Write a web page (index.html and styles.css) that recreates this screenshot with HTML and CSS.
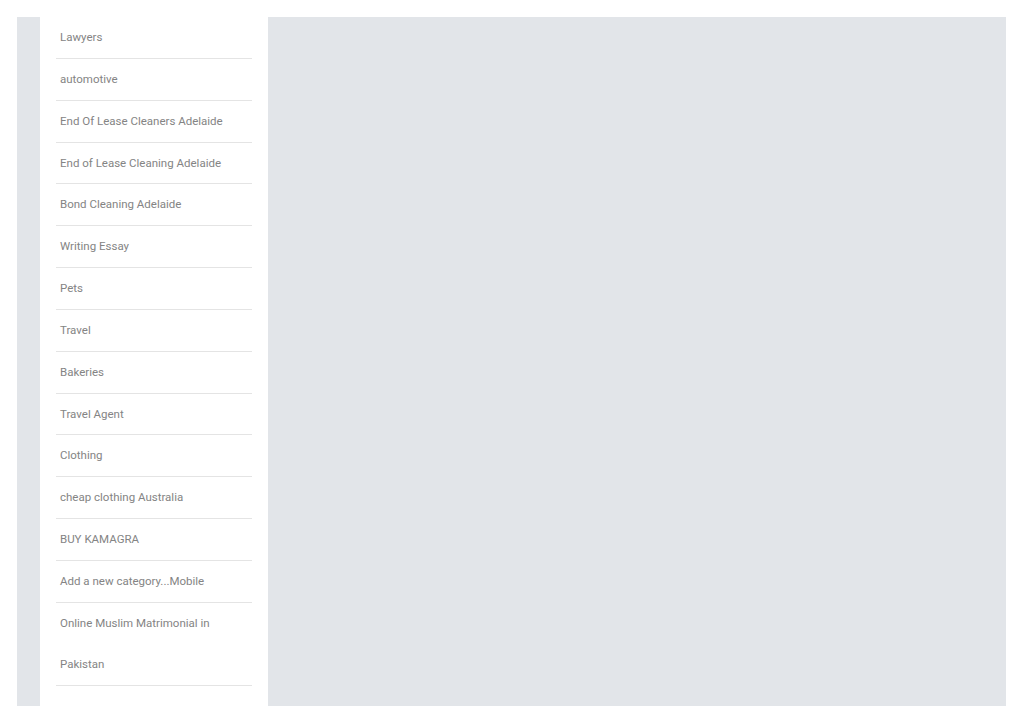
FILE: index.html
```html
<!DOCTYPE html>
<html lang="en">

<head>
    <meta charset="UTF-8">
    <meta name="viewport" content="width=device-width, initial-scale=1.0">
    <title>Categories</title>
    <link rel="stylesheet" href="styles.css">
</head>

<body>
    <div class="page">
        <aside class="sidebar">
            <ul class="categorias">
                <li><a href="#">Lawyers</a></li>
                <li><a href="#">automotive</a></li>
                <li><a href="#">End Of Lease Cleaners Adelaide</a></li>
                <li><a href="#">End of Lease Cleaning Adelaide</a></li>
                <li><a href="#">Bond Cleaning Adelaide</a></li>
                <li><a href="#">Writing Essay</a></li>
                <li><a href="#">Pets</a></li>
                <li><a href="#">Travel</a></li>
                <li><a href="#">Bakeries</a></li>
                <li><a href="#">Travel Agent</a></li>
                <li><a href="#">Clothing</a></li>
                <li><a href="#">cheap clothing Australia</a></li>
                <li><a href="#">BUY KAMAGRA</a></li>
                <li><a href="#">Add a new category...Mobile</a></li>
                <li><a href="#">Online Muslim Matrimonial in Pakistan</a></li>
            </ul>
        </aside>
        <main class="contenido"></main>
    </div>
</body>

</html>
```

FILE: styles.css
```css
body {
    font-family: Roboto, "Liberation Sans", sans-serif;
    margin: 0;
    padding: 17px 18px 17px 17px;
    background-color: #fff;
}

.page {
    display: flex;
    height: 689px;
    background-color: #e2e5e9;
    padding-left: 23px;
    overflow: hidden;
}

.sidebar {
    width: 196px;
    flex-shrink: 0;
    background-color: #fff;
    padding: 0 16px;
}

.categorias {
    list-style: none;
    margin: 0;
    padding: 0;
}

.categorias li {
    border-bottom: 1px solid #e4e4e4;
    padding: 0 4px;
}

.categorias li a {
    display: block;
    color: #848484;
    font-size: 11.5px;
    line-height: 40.85px;
    text-decoration: none;
}

.contenido {
    flex: 1;
}
```
